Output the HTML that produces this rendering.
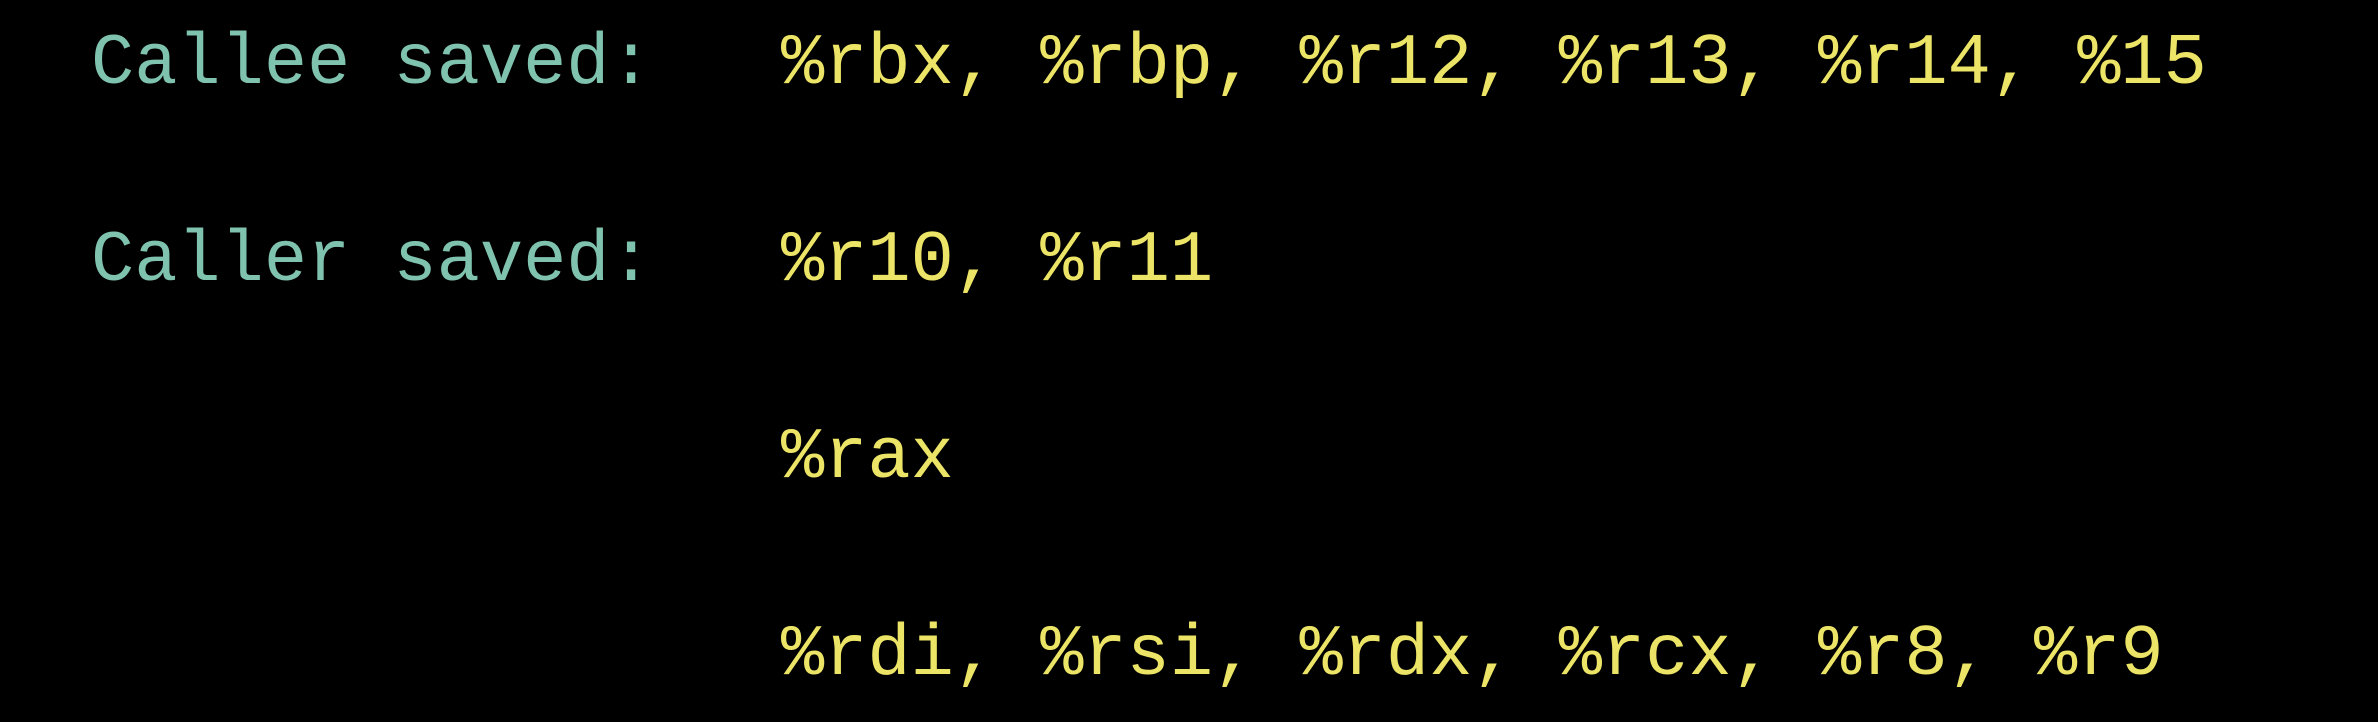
<!DOCTYPE html>
<html><head><style>
html,body{margin:0;width:2378px;height:722px;background:#000;overflow:hidden}
.t{position:absolute;font-family:"Liberation Mono",monospace;font-size:72px;line-height:1;white-space:pre}
.c{color:#7fc2ae}.y{color:#ece466}
</style></head><body>
<div class="t c" style="left:91px;top:28px">Callee saved:</div>
<div class="t y" style="left:781px;top:28px">%rbx, %rbp, %r12, %r13, %r14, %15</div>
<div class="t c" style="left:91px;top:225px">Caller saved:</div>
<div class="t y" style="left:781px;top:225px">%r10, %r11</div>
<div class="t y" style="left:781px;top:422px">%rax</div>
<div class="t y" style="left:781px;top:619px">%rdi, %rsi, %rdx, %rcx, %r8, %r9</div>
</body></html>
